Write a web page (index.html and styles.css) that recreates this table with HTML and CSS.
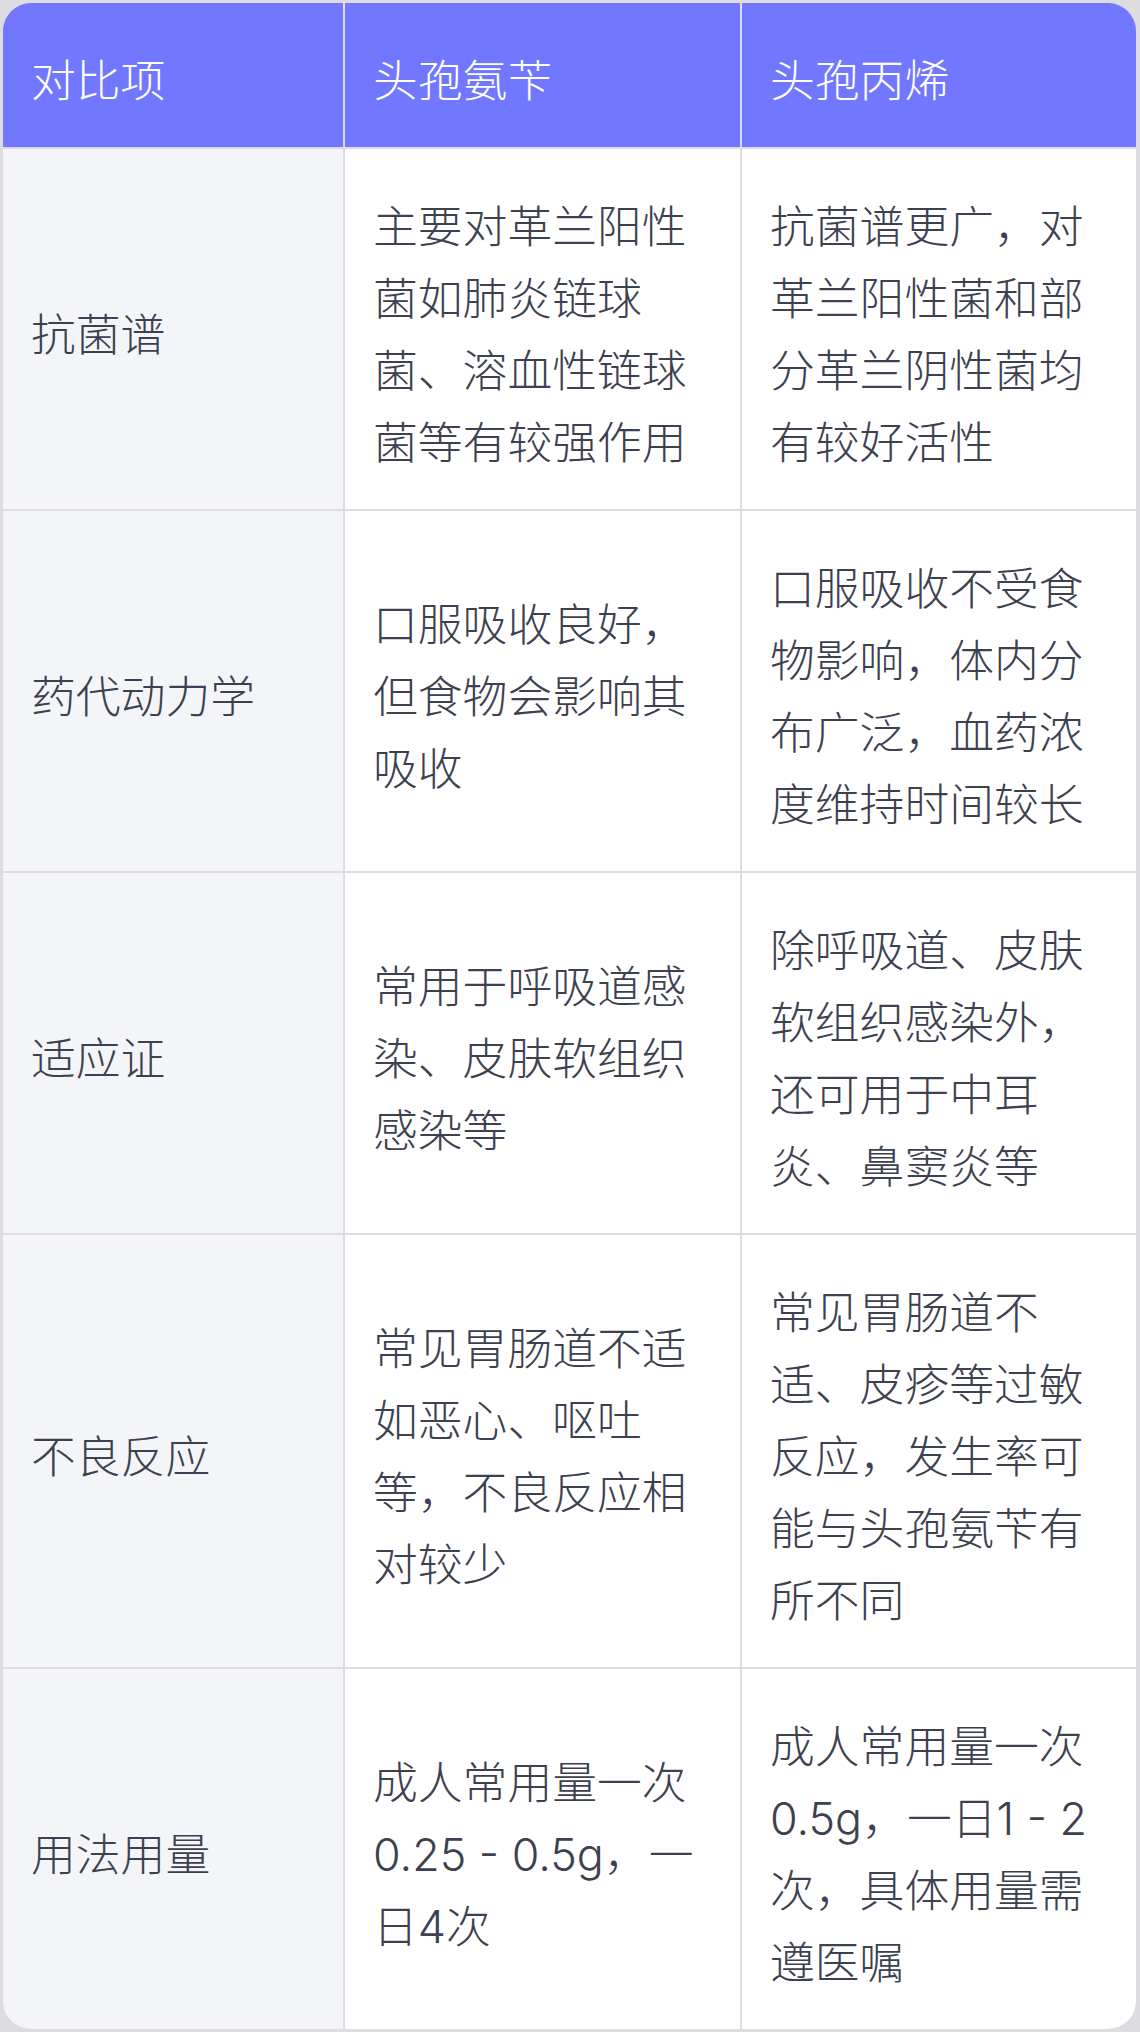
FILE: index.html
```html
<!DOCTYPE html>
<html>
<head>
    <meta charset="utf-8" />
    <title>头孢氨苄与头孢丙烯对比</title>
    <link rel="stylesheet" href="styles.css">
</head>
<body>
    <div class="compare">
        <div class="cell head">对比项</div>
        <div class="cell head">头孢氨苄</div>
        <div class="cell head">头孢丙烯</div>

        <div class="cell item">抗菌谱</div>
        <div class="cell">主要对革兰阳性菌如肺炎链球菌、溶血性链球菌等有较强作用</div>
        <div class="cell">抗菌谱更广，对革兰阳性菌和部分革兰阴性菌均有较好活性</div>

        <div class="cell item">药代动力学</div>
        <div class="cell">口服吸收良好，但食物会影响其吸收</div>
        <div class="cell">口服吸收不受食物影响，体内分布广泛，血药浓度维持时间较长</div>

        <div class="cell item">适应证</div>
        <div class="cell">常用于呼吸道感染、皮肤软组织感染等</div>
        <div class="cell">除呼吸道、皮肤软组织感染外，还可用于中耳炎、鼻窦炎等</div>

        <div class="cell item">不良反应</div>
        <div class="cell">常见胃肠道不适如恶心、呕吐等，不良反应相对较少</div>
        <div class="cell">常见胃肠道不适、皮疹等过敏反应，发生率可能与头孢氨苄有所不同</div>

        <div class="cell item">用法用量</div>
        <div class="cell">成人常用量一次0.25 - 0.5g，一日4次</div>
        <div class="cell">成人常用量一次0.5g，一日1 - 2次，具体用量需遵医嘱</div>
    </div>
</body>
</html>
```

FILE: styles.css
```css
html, body {
    margin: 0;
    background-color: #dcdce1;
}

body {
    padding: 3px 4px 4px 3px;
}

.compare {
    display: grid;
    grid-template-columns: 340px 395px 394px;
    gap: 2px;
    background-color: #dcdce1;
    border-radius: 28px;
    overflow: hidden;
    font-family: Inter, "Noto Sans CJK SC Light", "Noto Sans CJK SC", sans-serif;
    font-weight: 300;
    font-size: 44.8px;
    line-height: 72px;
    color: #3d414f;
}

.cell {
    display: flex;
    align-items: center;
    padding: 42px 28px 30px;
    background-color: #fff;
}

.head {
    background-color: #7177ff;
    color: #fff;
}

.item {
    background-color: #f4f5f9;
}
```
